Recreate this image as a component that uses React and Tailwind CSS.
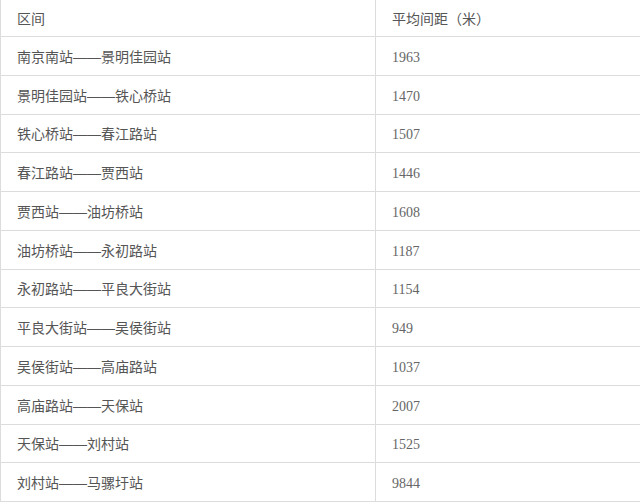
import React from "react";

const rows = [
  ["南京南站——景明佳园站", "1963"],
  ["景明佳园站——铁心桥站", "1470"],
  ["铁心桥站——春江路站", "1507"],
  ["春江路站——贾西站", "1446"],
  ["贾西站——油坊桥站", "1608"],
  ["油坊桥站——永初路站", "1187"],
  ["永初路站——平良大街站", "1154"],
  ["平良大街站——吴侯街站", "949"],
  ["吴侯街站——高庙路站", "1037"],
  ["高庙路站——天保站", "2007"],
  ["天保站——刘村站", "1525"],
  ["刘村站——马骡圩站", "9844"],
];

const cjk = { fontFamily: '"Noto Sans CJK SC", "Noto Sans", sans-serif' };
const serif = { fontFamily: '"Liberation Serif", serif' };

// em dash in Liberation Sans is a full 1em, like the source's 宋体/雅黑 dash
function Section({ name }) {
  const [from, to] = name.split("——");
  return (
    <span>
      {from}
      <span style={{ fontFamily: '"Liberation Sans", sans-serif' }}>——</span>
      {to}
    </span>
  );
}

export default function App() {
  return (
    <div className="w-[640px] h-[504px] bg-white overflow-hidden">
      <div className="border-l border-[#dcdcdc]">
        <div className="flex h-[37px] border-b border-[#dcdcdc] text-[14px] text-[#555]" style={cjk}>
          <div className="w-[375px] flex items-center pl-4 border-r border-[#dcdcdc]">区间</div>
          <div className="flex-1 flex items-center pl-4">平均间距（米）</div>
        </div>
        {rows.map(([name, dist]) => (
          <div key={name} className="flex h-[38.75px] border-b border-[#dcdcdc]">
            <div className="w-[375px] flex items-center pl-4 pt-[2px] border-r border-[#dcdcdc] text-[14px] text-[#555]" style={cjk}>
              <Section name={name} />
            </div>
            <div className="flex-1 flex items-center pl-4 pt-[3px] text-[14px] text-[#666]" style={serif}>
              {dist}
            </div>
          </div>
        ))}
      </div>
    </div>
  );
}
